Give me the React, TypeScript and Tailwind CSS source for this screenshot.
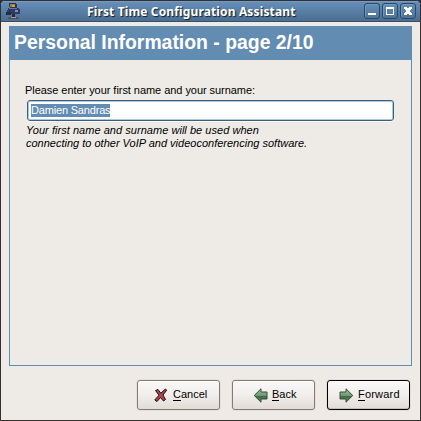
import type { ReactNode } from "react";

const ARIAL = "font-['Liberation_Sans',Arial,sans-serif]";

function AppIcon() {
  return (
    <svg width="16" height="18" viewBox="0 0 16 18" shapeRendering="crispEdges">
      <path d="M3 1h7v1h1v5H4V5H3z" fill="#35343c" />
      <path d="M4 2h5v3H4z" fill="#8f8148" />
      <path d="M6 3h3v2H6z" fill="#c2a54d" />
      <path d="M2 6h11v1h1v5H1V8h1z" fill="#303a63" />
      <path d="M3 6h8v1H3z" fill="#6878a3" />
      <path d="M9 8h3v2H9z" fill="#8791b5" />
      <path d="M0 10h5v3H0z" fill="#242c4c" />
      <path d="M6 12h3v3H6z" fill="#282a36" />
      <path d="M3 15h9v1h1v1H2v-1h1z" fill="#4e5057" />
      <path d="M5 15h5v1H5z" fill="#a0a09f" />
    </svg>
  );
}

function WindowButton({ children }: { children: ReactNode }) {
  return (
    <div className="flex h-4 w-4 items-center justify-center rounded-[3px] border border-[#294768] bg-linear-to-b from-[#6690b8] to-[#4d7396] shadow-[inset_1px_1px_0_#7199bd]">
      <svg width="14" height="14" viewBox="0 0 14 14" shapeRendering="crispEdges">
        {children}
      </svg>
    </div>
  );
}

function CancelIcon() {
  return (
    <svg width="14" height="15" viewBox="0 0 14 15">
      <path d="M1.500 2.500 4 1.500 6.800 5.200 11.500 1l1.200 1.200L9 7l2.500 4.500-2 1.500L6.500 9.500 3 13.500.8 12 5 7.200Z" fill="#b5414b" stroke="#171011" strokeWidth="1" strokeLinejoin="round" />
    </svg>
  );
}

function ArrowIcon({ flip = false }: { flip?: boolean }) {
  return (
    <svg width="15" height="15" viewBox="0 0 15 15" className={flip ? "-scale-x-100" : ""}>
      <defs>
        <linearGradient id={flip ? "arrow-l" : "arrow-r"} x2="0" y2="1">
          <stop offset="0" stopColor="#a6c6a2" />
          <stop offset=".5" stopColor="#6c9b70" />
          <stop offset=".55" stopColor="#416b46" />
          <stop offset="1" stopColor="#5a865d" />
        </linearGradient>
      </defs>
      <path d="M1 4h6V.8l6.800 6.700L7 14.200V11H1Z" fill={flip ? "url(#arrow-l)" : "url(#arrow-r)"} stroke="#3a4a3b" strokeWidth="1" strokeLinejoin="round" />
    </svg>
  );
}

function ActionButton({ icon, label, focused = false, pad, spacing }: { icon: ReactNode; label: string; focused?: boolean; pad: string; spacing: string }) {
  return (
    <button
      className={`flex h-[30px] w-[83px] items-center rounded-[3px] border bg-linear-to-b from-[#faf9f8] via-[#f1eeeb] to-[#e1dcd6] text-[11px] leading-none text-black ${pad} ${
        focused ? "border-black shadow-[inset_0_-1px_0_#c5bdb6,0_0_0_1px_#e4dfd8]" : "border-[#857b73] shadow-[inset_0_1px_0_#fff,0_0_0_1px_#e4dfd8]"
      }`}
    >
      {icon}
      <span className={`-mt-px whitespace-nowrap ${spacing}`}>
        <span className="border-b border-black">{label[0]}</span>
        {label.slice(1)}
      </span>
    </button>
  );
}

export default function App() {
  return (
    <div className="h-[421px] w-[421px] overflow-hidden bg-[#25313d]">
      <div className={`flex h-full w-full flex-col overflow-hidden rounded-t-[5px] border border-[#352f2f] bg-[#eeebe6] ${ARIAL}`}>
        <header className="flex h-[21px] shrink-0 items-center border-b border-[#36506b] bg-linear-to-b from-[#6690bb] to-[#4b6e91] pl-[5px] pr-[4px] shadow-[inset_0_1px_0_#769ac0]">
          <AppIcon />
          <h1 className="ml-[65px] w-[212px] whitespace-nowrap pt-px font-['Noto_Sans',sans-serif] text-[12px] leading-none font-bold tracking-[0.135px] text-white [text-shadow:1px_1px_1px_#101c28]">
            First Time Configuration Assistant
          </h1>
          <div className="ml-auto flex gap-[2px]">
            <WindowButton><path d="M3 9h8v2H3z" fill="#fff" /></WindowButton>
            <WindowButton><path d="M3 3h8v8H3zM4 5v5h6V5z" fill="#fff" fillRule="evenodd" /></WindowButton>
            <WindowButton><path d="M3 3h3v1h2V3h3v2h-1v1H9v2h1v1h1v2H8v-1H6v1H3V9h1V8h1V6H4V5H3z" fill="#fff" /></WindowButton>
          </div>
        </header>
        <main className="mx-2 mt-1 flex h-[340px] shrink-0 flex-col border border-[#628cb2]">
          <h2 className="flex h-[33px] shrink-0 items-center bg-[#628cb2] pb-[2px] pl-1 text-[19.4px] leading-none font-bold whitespace-nowrap text-white">
            Personal Information - page 2/10
          </h2>
          <section className="flex flex-col px-4 pt-[22px] text-[11px] text-black">
            <label className="-ml-px h-[18px] leading-4 tracking-[-0.05px] whitespace-nowrap">Please enter your first name and your surname:</label>
            <div className="ml-px flex h-[21px] w-[367px] items-center rounded-[3px] border border-[#405f80] bg-white pl-[3px] shadow-[inset_0_0_0_1px_#a9c9e0,0_1px_0_#faf9f7]">
              <span className="flex h-[13px] w-[79px] items-center bg-[#628cb2] tracking-[-0.18px] whitespace-nowrap text-white">Damien Sandras</span>
            </div>
            <p className="mt-[3px] leading-[13px] whitespace-nowrap italic">
              <span className="tracking-[0.04px]">Your first name and surname will be used when</span><br />connecting to other VoIP and videoconferencing software.
            </p>
          </section>
        </main>
        <footer className="mt-[14px] flex justify-end gap-3 pr-[10px]">
          <ActionButton icon={<CancelIcon />} label="Cancel" pad="gap-[5px] pl-[16px]" spacing="" />
          <ActionButton icon={<ArrowIcon flip />} label="Back" pad="gap-[4px] pl-[20px]" spacing="" />
          <ActionButton icon={<ArrowIcon />} label="Forward" pad="gap-[4px] pl-[11px]" spacing="tracking-[0.2px]" focused />
        </footer>
      </div>
    </div>
  );
}
